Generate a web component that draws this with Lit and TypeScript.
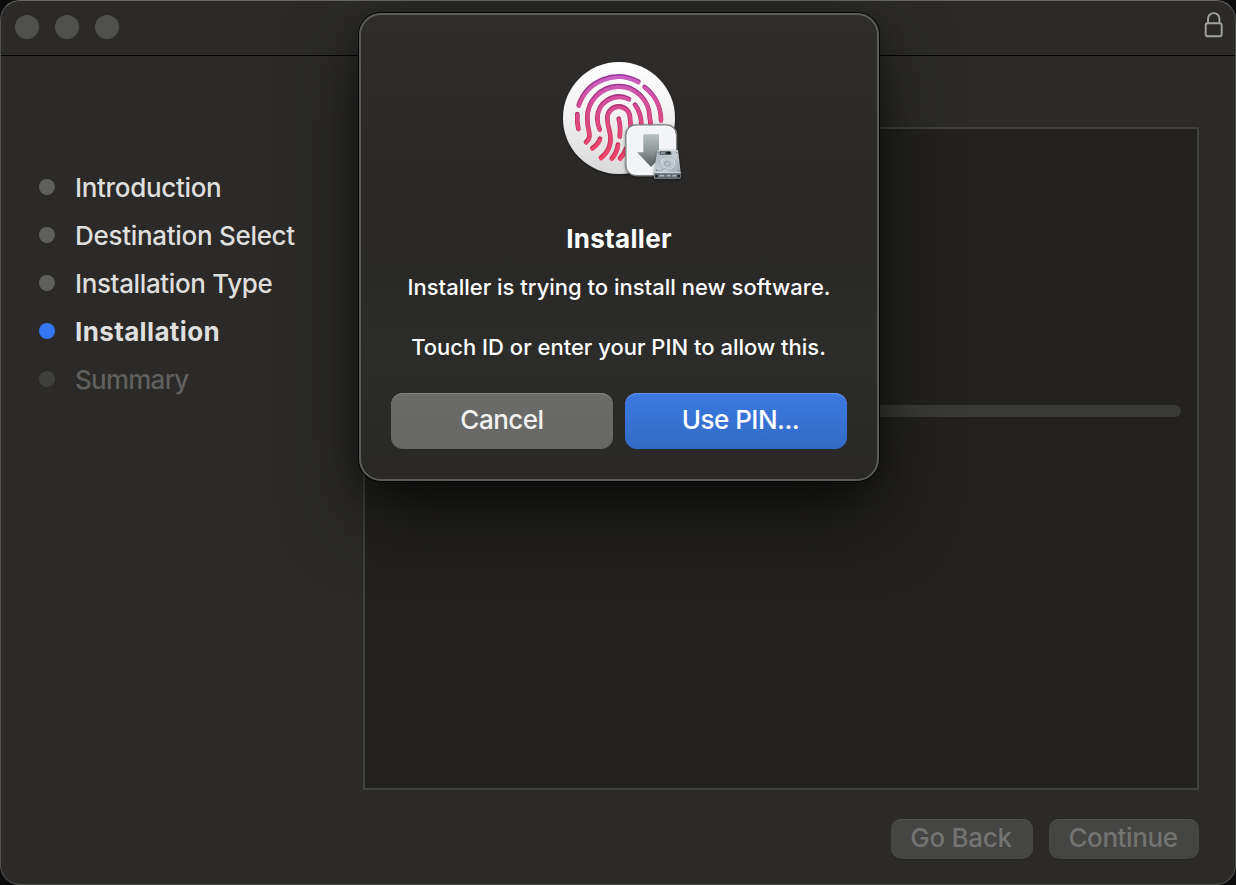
import { LitElement, html, css, svg } from "lit";
import { customElement, property } from "lit/decorators.js";
import { classMap } from "lit/directives/class-map.js";

type StepState = "done" | "current" | "pending";
interface Step { label: string; state: StepState; fit: string; }

const STEPS: Step[] = [
  { label: "Introduction", state: "done", fit: "intro" },
  { label: "Destination Select", state: "done", fit: "dest" },
  { label: "Installation Type", state: "done", fit: "type" },
  { label: "Installation", state: "current", fit: "inst" },
  { label: "Summary", state: "pending", fit: "summ" },
];

const RIDGES = [
  "M71 151A125 125 0 0 1 250 80",
  "M269 96A125 125 0 0 1 318 196",
  "M67 177Q65 200 70 221",
  "M93 261Q107 250 102 230Q97 210 97 190A93 94 0 0 1 284 186Q287 200 287 220",
  "M222 132A65 65 0 0 0 127 190Q127 208 134 223",
  "M240 149Q260 175 259 215",
  "M112 279Q129 268 135 251",
  "M138 308C163 288 172 260 163 226Q157 206 157 188A34 34 0 0 1 225 188Q228 210 227 240",
  "M191 191Q198 215 194 244",
  "M170 310Q185 295 189 269",
  "M195 310Q208 296 213 280",
];

@customElement("touch-id-icon")
export class TouchIdIcon extends LitElement {
  static styles = css`
    :host { display: block; width: 135px; height: 130px; }
    svg { display: block; overflow: visible; }
  `;
  render() {
    return html`<svg width="135" height="130" viewBox="0 0 405 390">
      <defs>
        <linearGradient id="disc" x1="0" y1="0" x2="0" y2="1"><stop offset="0" stop-color="#fff"/><stop offset=".4" stop-color="#f4f4f4"/><stop offset="1" stop-color="#d9d9d9"/></linearGradient>
        <linearGradient id="ridge" gradientUnits="userSpaceOnUse" x1="0" y1="60" x2="0" y2="310"><stop offset="0" stop-color="#c860c8"/><stop offset=".28" stop-color="#d4509f"/><stop offset=".6" stop-color="#e0487c"/><stop offset="1" stop-color="#ee4668"/></linearGradient>
        <linearGradient id="shade" gradientUnits="userSpaceOnUse" x1="0" y1="60" x2="0" y2="310"><stop offset="0" stop-color="#96379a"/><stop offset=".5" stop-color="#b42a60"/><stop offset="1" stop-color="#cf3152"/></linearGradient>
        <linearGradient id="arrow" x1="0" y1="0" x2="0" y2="1"><stop offset="0" stop-color="#b5bdbf"/><stop offset=".5" stop-color="#8f9799"/><stop offset="1" stop-color="#555d60"/></linearGradient>
        <linearGradient id="drive" x1="0" y1="0" x2="1" y2="1"><stop offset="0" stop-color="#aab3b9"/><stop offset=".5" stop-color="#c4cdd2"/><stop offset="1" stop-color="#929ca3"/></linearGradient>
        <filter id="soft" x="-20%" y="-20%" width="140%" height="140%"><feDropShadow dx="0" dy="3" stdDeviation="4" flood-color="#000" flood-opacity=".45"/></filter>
      </defs>
      <circle cx="192" cy="189" r="168" fill="url(#disc)" filter="url(#soft)"/>
      <g fill="none" stroke-linecap="round">
        <g stroke="url(#shade)" stroke-width="14">${RIDGES.map((d) => svg`<path d=${d}/>`)}</g>
        <g stroke="url(#ridge)" stroke-width="11" transform="translate(0.6 2.8)">${RIDGES.map((d) => svg`<path d=${d}/>`)}</g>
      </g>
      <rect x="213" y="210" width="151" height="151" rx="29" fill="#f3f4f7" stroke="#7f8586" stroke-width="5" filter="url(#soft)"/>
      <rect x="217" y="214" width="143" height="143" rx="25" fill="none" stroke="#fff" stroke-width="4"/>
      <path d="M265 238H312V292H331L288 336L246 292H265Z" fill="url(#arrow)"/>
      <g filter="url(#soft)">
        <path d="M307 286H369L377 353V366Q377 371 372 371H302Q297 371 297 366V353Z" fill="url(#drive)"/>
        <path d="M298 353H377V365Q377 371 371 371H303Q298 371 298 365Z" fill="#5e676e"/>
      </g>
      <path d="M307 287H369" stroke="#dfe5e8" stroke-width="2"/>
      <path d="M298 353H377" stroke="#dce3e7" stroke-width="3"/>
      <path d="M314 289H348L350 299H314Z" fill="#4f575c"/>
      <rect x="334" y="290" width="12" height="8" rx="3" fill="#181b1d"/>
      <path d="M318 294H330" stroke="#c5ccd0" stroke-width="3"/>
      <path d="M319 324A20 20 0 1 1 342 344Q327 349 309 345" fill="none" stroke="#e0e6e9" stroke-width="3"/>
      <ellipse cx="338" cy="325" rx="25" ry="20" fill="none" stroke="#9ba6ad" stroke-width="2"/>
      <ellipse cx="337" cy="326" rx="9" ry="7" fill="#bac5cb" stroke="#8d989f" stroke-width="2.5"/>
      <path d="M303 343Q317 352 331 340" fill="none" stroke="#929ca2" stroke-width="3"/>
      <path d="M304 360V367M371 360V367" stroke="#15191c" stroke-width="6"/>
      <path d="M313 362H328M335 362H347M352 362H364" stroke="#a8b3b9" stroke-width="5"/>
      <g fill="#6e787e"><circle cx="310" cy="293" r="2"/><circle cx="365" cy="293" r="2"/><circle cx="304" cy="347" r="2"/><circle cx="371" cy="347" r="2"/></g>
    </svg>`;
  }
}

@customElement("step-list")
export class StepList extends LitElement {
  @property({ attribute: false }) steps: Step[] = [];
  static styles = css`
    ul { list-style: none; margin: 0; padding: 0; }
    li { display: flex; align-items: center; gap: 20px; height: 48px; color: #dfdfde; font-size: 26px; line-height: 48px; white-space: nowrap; }
    .dot { width: 16px; height: 16px; border-radius: 50%; background: #5f5f5d; flex: none; position: relative; top: -1px; }
    .current { font-weight: 700; }
    .current .dot { background: #3478f6; }
    .pending { color: #5f5f5d; }
    .pending .dot { background: #3f3f3d; }
    .intro { letter-spacing: -0.33px; }
    .dest { letter-spacing: -0.3px; }
    .type { letter-spacing: -0.37px; }
    .inst { letter-spacing: 0.36px; }
    .summ { letter-spacing: -0.75px; }
  `;
  render() {
    return html`<ul>${this.steps.map((s) => html`
      <li class=${classMap({ [s.state]: true })}><span class="dot"></span><span class=${s.fit}>${s.label}</span></li>`)}
    </ul>`;
  }
}

@customElement("auth-dialog")
export class AuthDialog extends LitElement {
  static styles = css`
    :host {
      box-sizing: border-box; display: flex; flex-direction: column; align-items: center;
      width: 520px; height: 468px; padding: 40px 30px 30px; border: 2px solid #5b5b59; border-radius: 22px;
      background: linear-gradient(180deg, #2e2d2b, #292826 48%, #2c2c2a 72%, #292826);
      box-shadow: 0 0 0 1px #030303, 0 34px 72px rgba(0, 0, 0, .62), 0 4px 24px rgba(0, 0, 0, .22);
      color: #fff; white-space: nowrap;
    }
    touch-id-icon { margin-left: 7px; }
    h1 { margin: 38px 0 0; font-size: 26px; line-height: 32px; font-weight: 700; letter-spacing: 0.3px; }
    p { margin: 0; font-size: 22px; line-height: 30px; }
    .what { margin-top: 17px; letter-spacing: 0; }
    .how { margin-top: 30px; letter-spacing: 0; padding-right: 1px; }
    .actions { display: grid; grid-template-columns: 222px 222px; gap: 12px; margin-top: 31px; }
    button { height: 56px; padding: 0 0 3px; border: 0; border-radius: 12px; font: inherit; font-size: 26px; color: #f1f1f0; background: linear-gradient(#6b6b69, #666664); box-shadow: inset 0 1px 0 #858583; }
    .primary { padding-left: 9px; color: #fff; background: linear-gradient(#3b79e0, #326bc6); box-shadow: inset 0 1px 0 #6294e7; }
    .cancel { letter-spacing: -0.5px; }
    .pin { letter-spacing: -0.5px; }
  `;
  render() {
    return html`
      <touch-id-icon></touch-id-icon>
      <h1>Installer</h1>
      <p class="what">Installer is trying to install new software.</p>
      <p class="how">Touch ID or enter your PIN to allow this.</p>
      <div class="actions">
        <button><span class="cancel">Cancel</span></button>
        <button class="primary"><span class="pin">Use PIN...</span></button>
      </div>`;
  }
}

@customElement("app-root")
export class AppRoot extends LitElement {
  static styles = css`
    :host { display: block; position: relative; width: 1236px; height: 885px; overflow: hidden; background: #0c0c0c; font-family: Inter, "Liberation Sans", sans-serif; font-weight: 450; }
    .window { box-sizing: border-box; display: flex; flex-direction: column; height: 885px; border: 1px solid #50504e; border-top-color: #686866; border-radius: 20px; background: #2b2a28; overflow: hidden; }
    header { box-sizing: border-box; flex: none; display: flex; align-items: center; justify-content: space-between; height: 55px; padding: 0 11px 4px 14px; border-bottom: 1px solid #000; }
    .lights { display: flex; gap: 16px; padding-top: 1px; }
    .lights i { width: 24px; height: 24px; border-radius: 50%; background: #50504e; }
    .lock { display: block; margin-top: -2px; }
    .body { display: grid; grid-template-columns: 324px 836px; grid-template-rows: 663px 40px; column-gap: 0; row-gap: 29px; padding: 71px 0 0 38px; }
    step-list { display: block; padding-top: 37px; }
    .panel { box-sizing: border-box; border: 2px solid #40403f; background: #22211f; padding: 276px 16px 0; }
    .track { height: 12px; border-radius: 6px; background: #393937; }
    footer { grid-column: 2; display: flex; justify-content: flex-end; gap: 16px; }
    footer button { height: 40px; padding: 0 2px 2px 0; border: 0; border-radius: 10px; font: inherit; font-size: 26px; line-height: 38px; color: #737371; background: #454543; box-shadow: inset 0 1px 0 #50504e, 0 1px 1px rgba(0,0,0,.2); }
    .back { width: 142px; letter-spacing: -0.3px; }
    .next { width: 150px; letter-spacing: -0.4px; }
    auth-dialog { position: absolute; left: 359px; top: 13px; }
  `;
  render() {
    return html`
      <div class="window">
        <header>
          <div class="lights"><i></i><i></i><i></i></div>
          <svg class="lock" width="20" height="28" viewBox="0 0 20 28" fill="none" stroke="#a3a3a1" stroke-width="1.9">
            <rect x="1.7" y="12.3" width="16" height="13" rx="2"/>
            <path d="M4 12.3V7.8a5.7 5.7 0 0 1 11.4 0V12.3"/>
          </svg>
        </header>
        <div class="body">
          <step-list .steps=${STEPS}></step-list>
          <div class="panel"><div class="track"></div></div>
          <footer><button class="back" disabled>Go Back</button><button class="next" disabled>Continue</button></footer>
        </div>
      </div>
      <auth-dialog></auth-dialog>`;
  }
}
